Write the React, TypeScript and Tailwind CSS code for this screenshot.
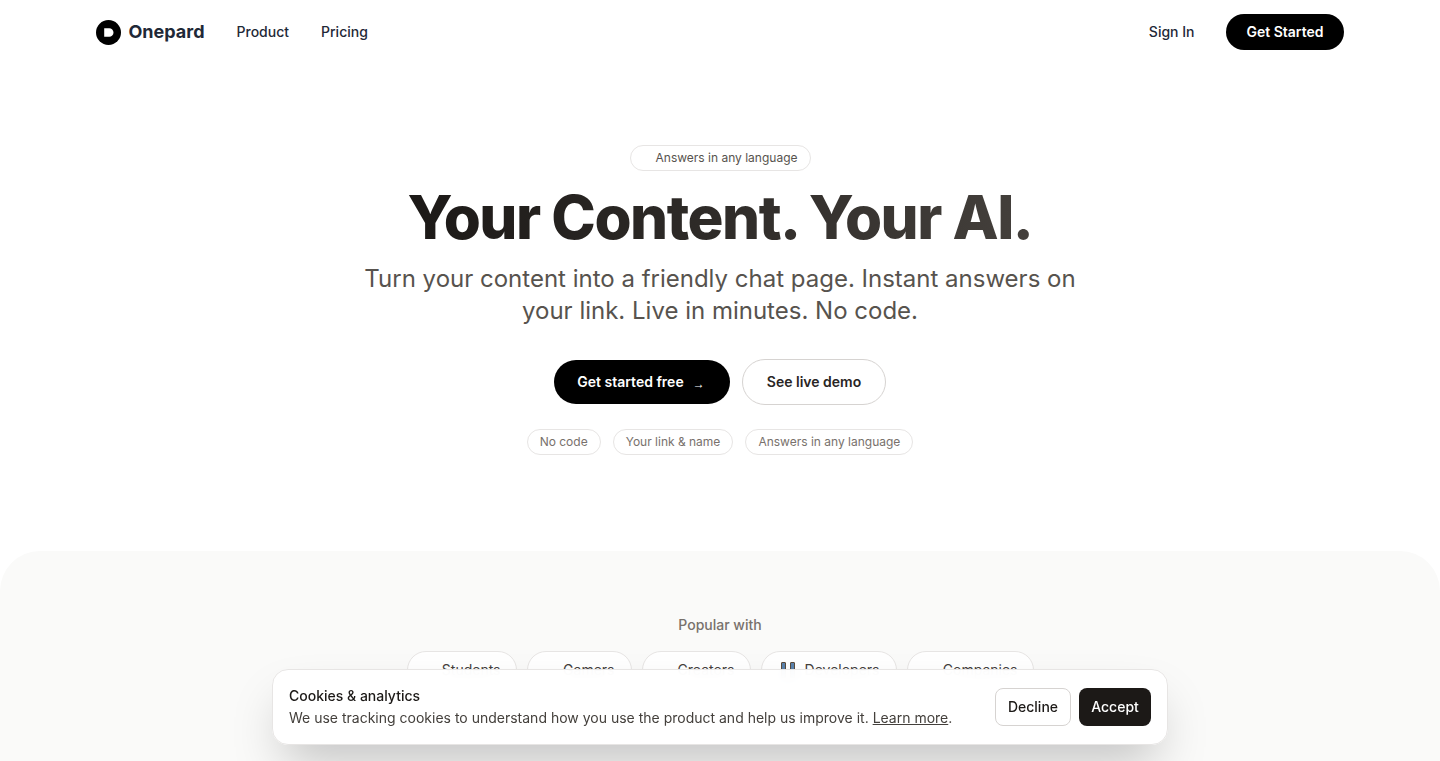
const heroPills = ['No code', 'Your link & name', 'Answers in any language'];

const audiences = [
  { label: 'Students', w: 'w-[110px] pr-[15px]' },
  { label: 'Gamers', w: 'w-[105px] pr-4' },
  { label: 'Creators', w: 'w-[109px] pr-[15px]' },
  { label: 'Developers', w: 'w-[136px] pr-4', glyph: true },
  { label: 'Companies', w: 'w-[127px] pr-[15px]' },
];

function Logo() {
  return (
    <svg width="25" height="25" viewBox="0 0 25 25" aria-hidden="true">
      <circle cx="12.5" cy="12.5" r="12.5" fill="#000" />
      <path d="M8.2 8.2h5a4.3 4.3 0 0 1 0 8.6h-5z" fill="#fff" />
    </svg>
  );
}

function CoderGlyph() {
  return (
    <span className="flex w-[14px] justify-between">
      <span className="h-4 w-[5px] rounded-[1px] border border-[#5a4a3a] bg-[#5a82ad]" />
      <span className="h-4 w-[5px] rounded-[1px] border border-[#5a4a3a] bg-[#5a82ad]" />
    </span>
  );
}

export default function App() {
  return (
    <div className="h-screen overflow-hidden bg-white font-['Inter',sans-serif]">
      <nav className="mx-auto flex h-16 max-w-[1248px] items-center justify-between">
        <div className="flex items-center">
          <a href="#" className="flex items-center gap-[7.5px]">
            <Logo />
            <span className="text-lg font-bold text-[#1f2937]">Onepard</span>
          </a>
          <a href="#" className="ml-8 text-sm font-medium text-[#1f2937]">Product</a>
          <a href="#" className="ml-8 text-sm font-medium text-[#1f2937]">Pricing</a>
        </div>
        <div className="flex items-center gap-[31.5px]">
          <a href="#" className="text-sm font-medium text-[#1f2937]">Sign In</a>
          <a href="#" className="flex h-9 w-[118px] items-center justify-center rounded-full bg-black text-sm font-semibold text-white">
            Get Started
          </a>
        </div>
      </nav>

      <section className="flex flex-col items-center pt-[81px]">
        <div className="flex h-[26px] w-[181px] items-center justify-end rounded-full border border-[#e7e5e4] pr-3 text-xs text-[#57534e]">
          Answers in any language
        </div>
        <h1 className="mt-[12px] bg-gradient-to-r from-[#1c1917] to-[#44403c] bg-clip-text text-[60px] leading-[68px] font-extrabold tracking-[-1.5px] text-transparent">
          Your Content. Your AI.
        </h1>
        <p className="mt-3 w-[720px] text-center text-2xl leading-8 text-[#57534e]">
          Turn your content into a friendly chat page. Instant answers on your link. Live in minutes. No code.
        </p>
        <div className="mt-8 flex items-center gap-3">
          <a href="#" className="flex h-11 w-[176px] items-center justify-center gap-[9px] rounded-full bg-black pr-[2px] text-sm font-semibold text-white">
            Get started free <span className="mt-[3px] font-['Liberation_Sans',sans-serif] text-xs font-normal">→</span>
          </a>
          <a href="#" className="flex h-[46px] w-[144px] items-center justify-center rounded-full border border-[#d6d3d1] text-sm font-semibold text-[#292524]">
            See live demo
          </a>
        </div>
        <div className="mt-6 flex gap-3">
          {heroPills.map((pill) => (
            <span key={pill} className="flex h-[26px] items-center rounded-full border border-[#e7e5e4] px-3 text-xs text-[#78716c]">
              {pill}
            </span>
          ))}
        </div>
      </section>

      <section className="mt-[96px] h-[300px] rounded-t-[40px] bg-[#fafaf9] pt-[64px]">
        <p className="text-center text-sm font-medium text-[#78716c]">Popular with</p>
        <div className="mt-[16px] flex justify-center gap-[10px]">
          {audiences.map((item) => (
            <div
              key={item.label}
              className={`flex h-[38px] items-center justify-end gap-2.5 rounded-full border border-[#e7e5e4] bg-white text-sm text-[#44403c] ${item.w}`}
            >
              {item.glyph && <CoderGlyph />}
              {item.label}
            </div>
          ))}
        </div>
      </section>

      <div className="fixed bottom-4 left-[272px] flex h-[76px] w-[896px] items-center justify-between rounded-2xl border border-[#e7e5e4] bg-white/95 px-4 shadow-2xl backdrop-blur">
        <div>
          <p className="text-sm leading-[22px] font-medium text-[#1c1917]">Cookies &amp; analytics</p>
          <p className="text-sm leading-[22px] text-[#44403c]">
            We use tracking cookies to understand how you use the product and help us improve it.{' '}
            <a href="#" className="underline">Learn more</a>.
          </p>
        </div>
        <div className="flex gap-2">
          <button className="h-[38px] w-[76px] rounded-lg border border-[#d6d3d1] bg-white text-sm font-medium text-[#1c1917]">Decline</button>
          <button className="h-[38px] w-[72px] rounded-lg bg-[#1c1917] text-sm font-medium text-white">Accept</button>
        </div>
      </div>
    </div>
  );
}
